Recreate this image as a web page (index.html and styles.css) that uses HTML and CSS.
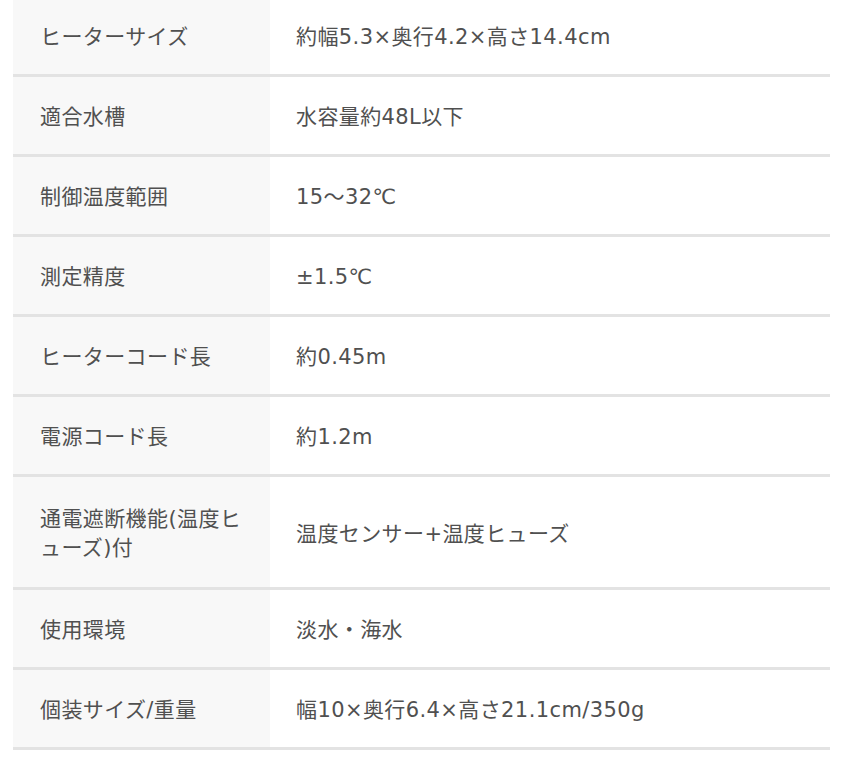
FILE: index.html
```html
<!DOCTYPE html>
<html lang="ja">
<head>
<meta charset="utf-8">
<link rel="stylesheet" href="styles.css">
</head>
<body>
<div class="spec">
  <div class="row"><div class="key">ヒーターサイズ</div><div class="val">約幅5.3×奥行4.2×高さ14.4cm</div></div>
  <div class="row"><div class="key">適合水槽</div><div class="val">水容量約48L以下</div></div>
  <div class="row"><div class="key">制御温度範囲</div><div class="val">15～32℃</div></div>
  <div class="row"><div class="key">測定精度</div><div class="val">±1.5℃</div></div>
  <div class="row"><div class="key">ヒーターコード長</div><div class="val">約0.45m</div></div>
  <div class="row"><div class="key">電源コード長</div><div class="val">約1.2m</div></div>
  <div class="row row-tall"><div class="key">通電遮断機能(温度ヒューズ)付</div><div class="val">温度センサー+温度ヒューズ</div></div>
  <div class="row"><div class="key">使用環境</div><div class="val">淡水・海水</div></div>
  <div class="row"><div class="key">個装サイズ/重量</div><div class="val">幅10×奥行6.4×高さ21.1cm/350g</div></div>
</div>
</body>
</html>
```
FILE: styles.css
```css
html, body {
  margin: 0;
  padding: 0;
  background: #ffffff;
}
body {
  font-family: "DejaVu Sans", "Noto Sans CJK JP", sans-serif;
  font-size: 21px;
  letter-spacing: 0.4px;
  color: #505050;
}
.spec {
  margin: -3px 0 0 13px;
  width: 817px;
}
.row {
  display: grid;
  grid-template-columns: 257px 1fr;
  border-bottom: 3px solid #e3e3e3;
}
.key, .val {
  display: flex;
  align-items: center;
  box-sizing: border-box;
  padding: 26px 24px 22px 27px;
  line-height: 29px;
}
.key {
  background: #f8f8f8;
}
.val {
  padding-left: 26px;
}
.row-tall .key, .row-tall .val {
  padding-top: 28px;
  padding-bottom: 24px;
}
```
